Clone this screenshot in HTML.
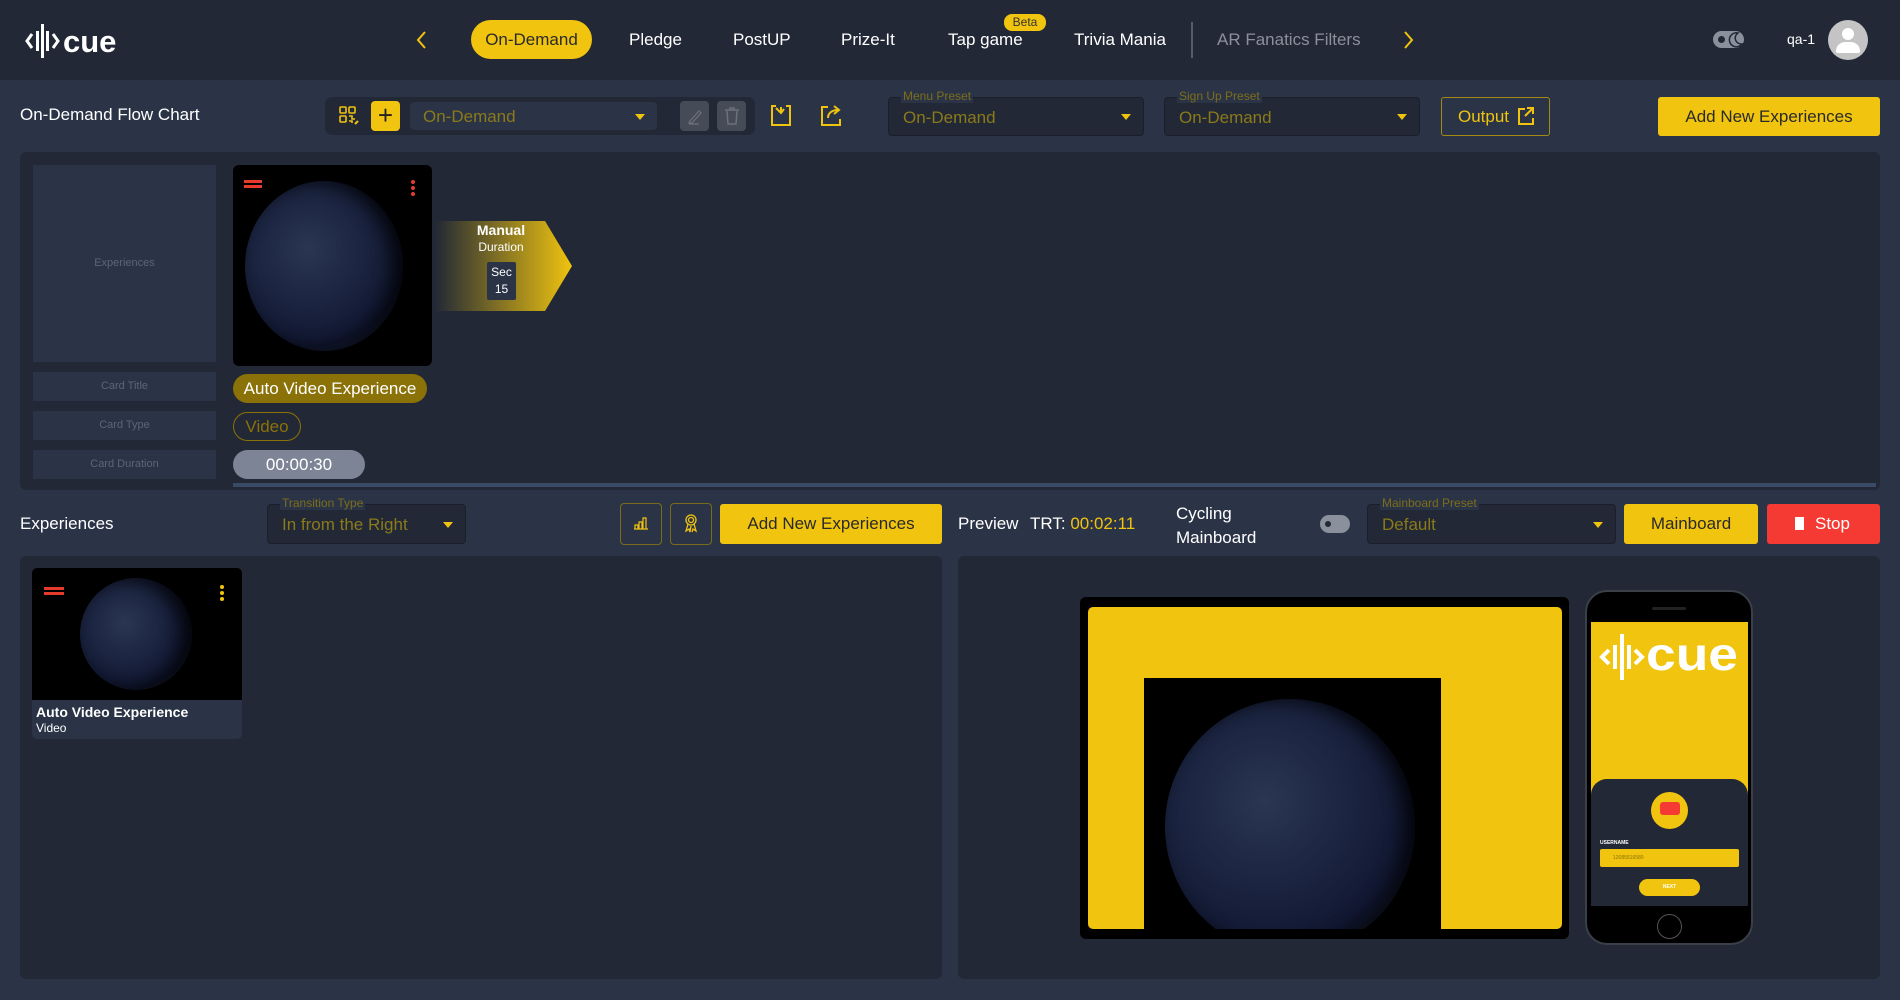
<!DOCTYPE html>
<html><head><meta charset="utf-8"><style>
*{box-sizing:border-box;margin:0;padding:0}
body{width:1900px;height:1000px;background:#2b3447;font-family:"Liberation Sans",sans-serif;color:#fff;position:relative;overflow:hidden}
.a{position:absolute}
.hdr{left:0;top:0;width:1900px;height:80px;background:#222836}
.nav{font-size:17px;color:#fff;top:30px;white-space:nowrap}
.panel{background:#222836;border-radius:6px}
.sel{border:1px solid #1a1f2b;background:#222836;border-radius:4px}
.sel .t{position:absolute;left:14px;top:10px;font-size:17px;color:#8a7a1a}
.sel .lb{position:absolute;left:12px;top:-9px;font-size:12px;color:#7d6d1a;background:#2b3447;padding:0 2px}
.tri{position:absolute;width:0;height:0;border-left:5px solid transparent;border-right:5px solid transparent;border-top:6px solid #f0c30f}
.ybtn{background:#f0c40f;color:#2a2a2a;border-radius:3px;font-size:17px;text-align:center}
.lbl{background:#2b3447;color:#5c6578;font-size:11px;text-align:center}
.earth{border-radius:50%;background:radial-gradient(circle at 40% 40%,#2a3652 0%,#1b2440 40%,#101630 70%,#2c3e58 90%,#6a8aa8 97%,#1a2030 100%);box-shadow:inset -10px 0 18px rgba(0,0,0,.8)}
</style></head><body>
<div class="a hdr"></div>
<svg class="a" style="left:24px;top:22px" width="100" height="38" viewBox="0 0 100 38">
<path d="M8 12 L3 19 L8 26" stroke="#fff" stroke-width="3" fill="none"/>
<rect x="12" y="9" width="3" height="20" fill="#fff"/><rect x="17" y="2" width="3" height="34" fill="#fff"/><rect x="22" y="9" width="3" height="20" fill="#fff"/>
<path d="M29 12 L34 19 L29 26" stroke="#fff" stroke-width="3" fill="none"/>
<text x="39" y="30" font-family="Liberation Sans" font-weight="bold" font-size="31" fill="#fff">cue</text>
</svg>
<svg class="a" style="left:416px;top:31px" width="12" height="18"><path d="M9 1 L2 9 L9 17" stroke="#f0c30f" stroke-width="2" fill="none"/></svg>
<div class="a" style="left:471px;top:20px;width:121px;height:39px;background:#f0c40f;border-radius:20px;color:#2a2a2a;font-size:17px;text-align:center;line-height:39px">On-Demand</div>
<div class="a nav" style="left:629px">Pledge</div>
<div class="a nav" style="left:733px">PostUP</div>
<div class="a nav" style="left:841px">Prize-It</div>
<div class="a nav" style="left:948px">Tap game</div>
<div class="a" style="left:1004px;top:14px;width:42px;height:17px;background:#f0c40f;border-radius:8px;color:#333;font-size:12px;text-align:center;line-height:17px">Beta</div>
<div class="a nav" style="left:1074px">Trivia Mania</div>
<div class="a" style="left:1191px;top:22px;width:2px;height:36px;background:#555c6a"></div>
<div class="a nav" style="left:1217px;color:#8b909a">AR Fanatics Filters</div>
<svg class="a" style="left:1402px;top:31px" width="12" height="18"><path d="M3 1 L10 9 L3 17" stroke="#f0c30f" stroke-width="2" fill="none"/></svg>
<div class="a" style="left:1713px;top:31px;width:31px;height:17px;background:#8a909c;border-radius:9px"></div>
<div class="a" style="left:1718px;top:36px;width:7px;height:7px;background:#222836;border-radius:50%"></div>
<svg class="a" style="left:1728px;top:31px" width="16" height="17"><path d="M10 2 A7 7 0 1 0 14 13 A6 6 0 0 1 10 2Z" stroke="#222836" stroke-width="1.5" fill="none"/></svg>
<div class="a" style="left:1787px;top:31px;font-size:14px">qa-1</div>
<div class="a" style="left:1828px;top:20px;width:40px;height:40px;border-radius:50%;background:#c4c4c4;overflow:hidden">
<div class="a" style="left:14px;top:8px;width:12px;height:12px;border-radius:50%;background:#fff"></div>
<div class="a" style="left:8px;top:22px;width:24px;height:11px;border-radius:10px 10px 2px 2px;background:#fff"></div></div>

<div class="a" style="left:20px;top:105px;font-size:17px">On-Demand Flow Chart</div>
<div class="a" style="left:325px;top:97px;width:430px;height:38px;background:#222836;border-radius:7px"></div>
<svg class="a" style="left:338px;top:105px" width="24" height="24" viewBox="0 0 24 24" fill="none" stroke="#f0c30f" stroke-width="1.6"><rect x="2" y="2" width="6" height="6" rx="1"/><rect x="11" y="2" width="6" height="6" rx="1"/><rect x="2" y="11" width="6" height="6" rx="1"/><path d="M11 11h3v3h3M11 16h3v2"/><path d="M17 19l3-3" stroke-width="2"/></svg>
<div class="a" style="left:371px;top:101px;width:29px;height:30px;background:#f0c40f;border-radius:4px;color:#222;font-size:26px;text-align:center;line-height:28px">+</div>
<div class="a" style="left:410px;top:102px;width:247px;height:28px;background:#2b3447;border-radius:4px"><span class="a" style="left:13px;top:5px;font-size:17px;color:#8a7a1a">On-Demand</span><div class="tri" style="left:225px;top:12px"></div></div>
<div class="a" style="left:680px;top:101px;width:29px;height:30px;background:#454b57;border-radius:4px"></div>
<svg class="a" style="left:686px;top:107px" width="18" height="18"><path d="M4 14 L13 4 L15 6 L6 16 L3 16Z M3 17h10" stroke="#6c717c" fill="none" stroke-width="1.2"/></svg>
<div class="a" style="left:717px;top:101px;width:29px;height:30px;background:#454b57;border-radius:4px"></div>
<svg class="a" style="left:723px;top:106px" width="18" height="20"><path d="M2 4h14M7 4V2h4v2M4 5l1 13h8l1-13" stroke="#6c717c" fill="none" stroke-width="1.5"/></svg>
<svg class="a" style="left:770px;top:103px" width="22" height="24" viewBox="0 0 22 24" fill="none" stroke="#f0c30f" stroke-width="2"><path d="M6 3H2v19h18V3h-4"/><path d="M6 5l5 5 3-4M11 10V4"/></svg>
<svg class="a" style="left:820px;top:103px" width="22" height="24" viewBox="0 0 22 24" fill="none" stroke="#f0c30f" stroke-width="2"><path d="M8 4H2v18h18v-6"/><path d="M8 15c0-5 4-8 10-8M14 3l5 4-5 4"/></svg>

<div class="a sel" style="left:888px;top:97px;width:256px;height:39px"><span class="lb">Menu Preset</span><span class="t">On-Demand</span><div class="tri" style="left:232px;top:16px"></div></div>
<div class="a sel" style="left:1164px;top:97px;width:256px;height:39px"><span class="lb">Sign Up Preset</span><span class="t">On-Demand</span><div class="tri" style="left:232px;top:16px"></div></div>
<div class="a" style="left:1441px;top:97px;width:109px;height:39px;border:1px solid #a48a14;border-radius:3px;color:#f0c30f;font-size:17px;padding:9px 0 0 16px">Output</div>
<svg class="a" style="left:1518px;top:107px" width="16" height="18" fill="none" stroke="#f0c30f" stroke-width="2"><path d="M7 2H1v15h14v-6M9 1h6v6M15 1L7 9"/></svg>
<div class="a ybtn" style="left:1658px;top:97px;width:222px;height:39px;line-height:39px">Add New Experiences</div>

<div class="a panel" style="left:20px;top:152px;width:1860px;height:338px"></div>
<div class="a lbl" style="left:33px;top:165px;width:183px;height:197px;line-height:197px">Experiences</div>
<div class="a lbl" style="left:33px;top:372px;width:183px;height:29px;line-height:29px">Card Title</div>
<div class="a lbl" style="left:33px;top:411px;width:183px;height:29px;line-height:29px">Card Type</div>
<div class="a lbl" style="left:33px;top:450px;width:183px;height:29px;line-height:29px">Card Duration</div>
<div class="a" style="left:233px;top:165px;width:199px;height:201px;background:#000;border-radius:6px;overflow:hidden">
<div class="a earth" style="left:12px;top:16px;width:158px;height:170px"></div>
<div class="a" style="left:11px;top:15px;width:18px;height:3px;background:#e53b2c;box-shadow:0 5px 0 #e53b2c"></div>
<div class="a" style="left:178px;top:15px;width:4px;height:4px;border-radius:50%;background:#e53b2c;box-shadow:0 6px 0 #e53b2c,0 12px 0 #e53b2c"></div></div>
<svg class="a" style="left:435px;top:221px" width="138" height="91"><defs><linearGradient id="g" x1="0" x2="1"><stop offset="0" stop-color="#222836"/><stop offset="1" stop-color="#f0c40f"/></linearGradient></defs><path d="M0 0H110L137 45L110 90H0Z" fill="url(#g)"/></svg>
<div class="a" style="left:435px;top:222px;width:132px;text-align:center;font-size:14px;font-weight:bold">Manual</div>
<div class="a" style="left:435px;top:240px;width:132px;text-align:center;font-size:12px">Duration</div>
<div class="a" style="left:487px;top:262px;width:29px;height:38px;background:#2b3447;border-radius:2px;font-size:12px;text-align:center;line-height:17px;padding-top:2px">Sec<br>15</div>
<div class="a" style="left:233px;top:374px;width:194px;height:29px;background:#8a7208;border-radius:15px;font-size:17px;text-align:center;line-height:29px">Auto Video Experience</div>
<div class="a" style="left:233px;top:412px;width:68px;height:29px;border:1px solid #8a7208;border-radius:15px;font-size:17px;text-align:center;line-height:27px;color:#8a7208">Video</div>
<div class="a" style="left:233px;top:450px;width:132px;height:29px;background:#7c8496;border-radius:15px;font-size:17px;text-align:center;line-height:29px">00:00:30</div>
<div class="a" style="left:233px;top:483px;width:1643px;height:4px;background:#3a4a66"></div>

<div class="a" style="left:20px;top:514px;font-size:17px">Experiences</div>
<div class="a sel" style="left:267px;top:504px;width:199px;height:40px"><span class="lb">Transition Type</span><span class="t">In from the Right</span><div class="tri" style="left:175px;top:17px"></div></div>
<div class="a" style="left:620px;top:503px;width:42px;height:42px;border:1px solid #7a6a1a;border-radius:4px"></div>
<svg class="a" style="left:633px;top:516px" width="16" height="14" fill="none" stroke="#f0c30f" stroke-width="1.2"><path d="M1 13h14M2 13V9h3v4M6 13V6h3v7M10 13V2h3v11"/></svg>
<div class="a" style="left:670px;top:503px;width:42px;height:42px;border:1px solid #7a6a1a;border-radius:4px"></div>
<svg class="a" style="left:683px;top:513px" width="16" height="22" fill="none" stroke="#f0c30f" stroke-width="1.3"><circle cx="8" cy="7" r="5"/><circle cx="8" cy="7" r="2.5"/><path d="M5 11l-2 7 3-2 1 3 1-6M11 11l2 7-3-2-1 3"/></svg>
<div class="a ybtn" style="left:720px;top:504px;width:222px;height:40px;line-height:40px">Add New Experiences</div>
<div class="a" style="left:958px;top:514px;font-size:17px">Preview</div>
<div class="a" style="left:1030px;top:514px;font-size:17px">TRT: <span style="color:#f0c30f">00:02:11</span></div>
<div class="a" style="left:1176px;top:502px;font-size:17px;line-height:24px">Cycling<br>Mainboard</div>
<div class="a" style="left:1320px;top:515px;width:30px;height:18px;background:#8a909c;border-radius:9px"></div>
<div class="a" style="left:1325px;top:521px;width:6px;height:6px;background:#222836;border-radius:50%"></div>
<div class="a sel" style="left:1367px;top:504px;width:249px;height:40px"><span class="lb">Mainboard Preset</span><span class="t">Default</span><div class="tri" style="left:225px;top:17px"></div></div>
<div class="a ybtn" style="left:1624px;top:504px;width:134px;height:40px;line-height:40px">Mainboard</div>
<div class="a" style="left:1767px;top:504px;width:113px;height:40px;background:#f53a33;border-radius:3px;font-size:17px;line-height:40px;padding-left:48px">Stop</div>
<div class="a" style="left:1795px;top:517px;width:9px;height:13px;background:#fff"></div>

<div class="a panel" style="left:20px;top:556px;width:922px;height:423px"></div>
<div class="a" style="left:32px;top:568px;width:210px;height:171px;background:#2b3447;border-radius:5px;overflow:hidden">
<div class="a" style="left:0;top:0;width:210px;height:132px;background:#000"></div>
<div class="a earth" style="left:48px;top:10px;width:112px;height:112px"></div>
<div class="a" style="left:12px;top:19px;width:20px;height:3px;background:#e53b2c;box-shadow:0 5px 0 #e53b2c"></div>
<div class="a" style="left:188px;top:17px;width:4px;height:4px;border-radius:50%;background:#f0c30f;box-shadow:0 6px 0 #f0c30f,0 12px 0 #f0c30f"></div>
<div class="a" style="left:4px;top:136px;font-size:14px;font-weight:bold">Auto Video Experience</div>
<div class="a" style="left:4px;top:153px;font-size:12px">Video</div></div>

<div class="a panel" style="left:958px;top:556px;width:922px;height:423px"></div>
<div class="a" style="left:1080px;top:597px;width:489px;height:342px;background:#000;border-radius:6px"></div>
<div class="a" style="left:1088px;top:607px;width:474px;height:322px;background:#f0c40f;border-radius:5px;overflow:hidden">
<div class="a" style="left:56px;top:71px;width:297px;height:260px;background:#000;overflow:hidden">
<div class="a earth" style="left:21px;top:21px;width:250px;height:255px"></div></div></div>

<div class="a" style="left:1585px;top:590px;width:168px;height:355px;background:#000;border-radius:22px;border:2px solid #3a3f48"></div>
<div class="a" style="left:1652px;top:607px;width:34px;height:3px;background:#222;border-radius:2px"></div>
<div class="a" style="left:1591px;top:622px;width:157px;height:284px;background:#f0c40f"></div>
<svg class="a" style="left:1598px;top:632px" width="146" height="50" viewBox="0 0 146 50">
<path d="M11 18 L4 25 L11 32" stroke="#fff" stroke-width="4" fill="none"/>
<rect x="15" y="13" width="4" height="24" fill="#fff"/><rect x="22" y="2" width="4" height="46" fill="#fff"/><rect x="29" y="13" width="4" height="24" fill="#fff"/>
<path d="M37 18 L44 25 L37 32" stroke="#fff" stroke-width="4" fill="none"/>
<text x="48" y="38" font-family="Liberation Sans" font-weight="bold" font-size="46" fill="#fff" textLength="92" lengthAdjust="spacingAndGlyphs">cue</text></svg>
<div class="a" style="left:1591px;top:779px;width:157px;height:127px;background:#222836;border-radius:16px 16px 0 0"></div>
<div class="a" style="left:1651px;top:792px;width:37px;height:37px;border-radius:50%;background:#f0c40f"></div>
<div class="a" style="left:1660px;top:802px;width:20px;height:13px;background:#f53a33;border-radius:3px"></div>
<div class="a" style="left:1600px;top:840px;font-size:5px;font-weight:bold">USERNAME</div>
<div class="a" style="left:1600px;top:849px;width:139px;height:18px;background:#f0c40f;border-radius:2px;font-size:5px;color:#8a7208;padding:6px 0 0 13px">12085516580</div>
<div class="a" style="left:1639px;top:879px;width:61px;height:17px;background:#f0c40f;border-radius:9px;font-size:5px;font-weight:bold;text-align:center;line-height:17px">NEXT</div>
<div class="a" style="left:1657px;top:914px;width:25px;height:25px;border-radius:50%;border:1px solid #555"></div>
</body></html>
